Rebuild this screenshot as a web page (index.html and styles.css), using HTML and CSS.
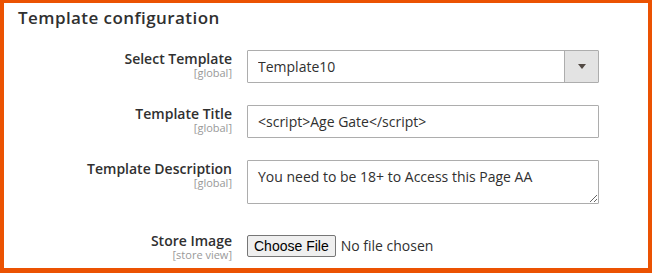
FILE: index.html
```html
<!DOCTYPE html>
<html lang="en">
<head>
    <meta charset="UTF-8">
    <meta name="viewport" content="width=device-width, initial-scale=1.0">
    <title>Template configuration</title>
    <link rel="stylesheet" href="styles.css">
</head>
<body>
    <div class="frame">
        <h2 class="fieldset-title">Template configuration</h2>

        <div class="fieldset">
            <div class="field">
                <div class="field-label">
                    <label for="template">Select Template</label>
                    <span class="scope">[global]</span>
                </div>
                <div class="control">
                    <div class="select-wrap">
                        <select id="template" class="select">
                            <option>Template10</option>
                        </select>
                        <span class="select-btn"><span class="arrow"></span></span>
                    </div>
                </div>
            </div>

            <div class="field">
                <div class="field-label">
                    <label for="title">Template Title</label>
                    <span class="scope">[global]</span>
                </div>
                <div class="control">
                    <input type="text" id="title" class="input-text" value="<script>Age Gate</script>">
                </div>
            </div>

            <div class="field">
                <div class="field-label">
                    <label for="description">Template Description</label>
                    <span class="scope">[global]</span>
                </div>
                <div class="control">
                    <textarea id="description" class="textarea">You need to be 18+ to Access this Page AA</textarea>
                </div>
            </div>

            <div class="field field-file">
                <div class="field-label">
                    <label for="image">Store Image</label>
                    <span class="scope">[store view]</span>
                </div>
                <div class="control">
                    <input type="file" id="image" class="input-file">
                </div>
            </div>
        </div>
    </div>
</body>
</html>
```

FILE: styles.css
```css
* {
    margin: 0;
    padding: 0;
    box-sizing: border-box;
}
body {
    font-family: "Open Sans", Arial, sans-serif;
    color: #303030;
    background: #ffffff;
}
.frame {
    width: 652px;
    height: 273px;
    border: 4px solid #eb5202;
    border-top-width: 3px;
    border-bottom-width: 5px;
    overflow: hidden;
}
.fieldset-title {
    font-size: 17px;
    font-weight: 600;
    letter-spacing: 0.025em;
    color: #303030;
    line-height: 22px;
    padding: 4px 0 0 14px;
}
.fieldset {
    display: flex;
    flex-direction: column;
    gap: 22px;
    padding-top: 21px;
}
.field {
    display: grid;
    grid-template-columns: 228px 352px;
    column-gap: 15px;
}
.field-label {
    display: flex;
    flex-direction: column;
    align-items: flex-end;
    text-align: right;
}
.field-label label {
    font-size: 14px;
    font-weight: 600;
    line-height: 17px;
    color: #303030;
}
.scope {
    font-size: 11px;
    line-height: 11px;
    color: #999999;
}
.select-wrap {
    position: relative;
    height: 33px;
}
.select {
    width: 100%;
    height: 33px;
    appearance: none;
    border: 1px solid #adadad;
    border-radius: 1px;
    background: #ffffff;
    font-family: "Open Sans", Arial, sans-serif;
    font-size: 14px;
    color: #303030;
    padding: 0 44px 0 10px;
}
.select-btn {
    position: absolute;
    top: 1px;
    right: 1px;
    bottom: 1px;
    width: 34px;
    background: #e3e3e3;
    border-left: 1px solid #adadad;
    display: flex;
    align-items: center;
    justify-content: center;
    pointer-events: none;
}
.arrow {
    width: 0;
    height: 0;
    border-left: 4px solid transparent;
    border-right: 4px solid transparent;
    border-top: 5px solid #514943;
}
.input-text {
    width: 100%;
    height: 33px;
    border: 1px solid #adadad;
    border-radius: 1px;
    font-family: "Open Sans", Arial, sans-serif;
    font-size: 14px;
    color: #303030;
    padding: 0 10px;
}
.textarea {
    display: block;
    width: 100%;
    height: 44px;
    border: 1px solid #adadad;
    border-radius: 1px;
    font-family: "Open Sans", Arial, sans-serif;
    font-size: 14px;
    line-height: 19px;
    color: #303030;
    padding: 6px 10px;
    resize: vertical;
}
.field-file {
    margin-top: 9px;
}
.field-file .field-label {
    margin-top: -3px;
}
.input-file {
    display: block;
    height: 22px;
    font-family: "Open Sans", Arial, sans-serif;
    font-size: 14px;
    color: #303030;
    line-height: 22px;
}
.input-file::file-selector-button {
    font-family: "Liberation Sans", Arial, sans-serif;
    font-size: 14px;
    height: 22px;
    padding: 0 6px;
    margin-right: 5px;
    background: #efefef;
    color: #000000;
    border: 1px solid #767676;
    border-radius: 2px;
}
```
